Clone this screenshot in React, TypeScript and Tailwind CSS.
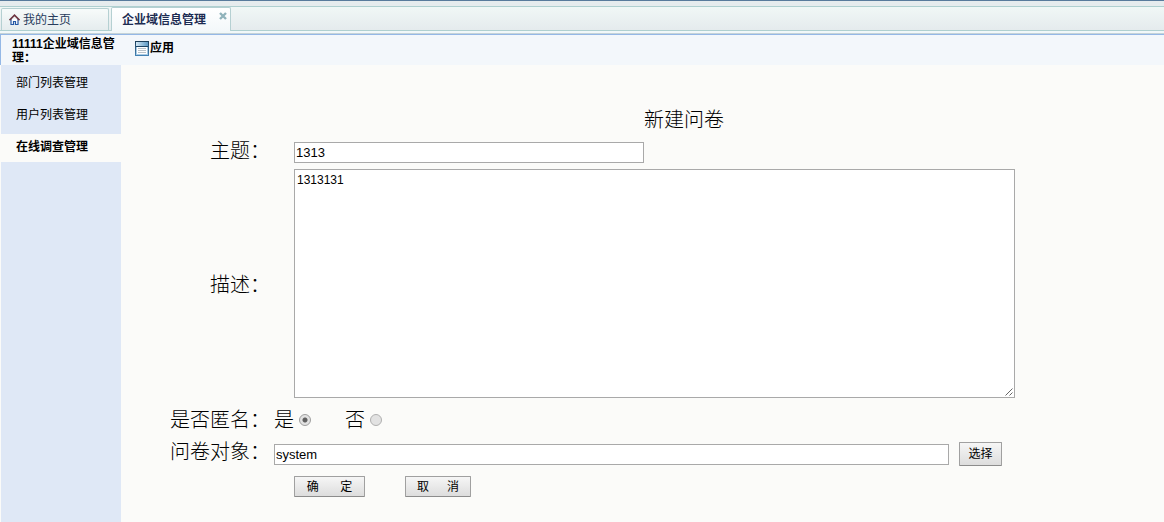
import { useState } from "react";

const sidebarItems = ["部门列表管理", "用户列表管理", "在线调查管理"];

const fieldBox =
  "block border border-[#a9a9a9] bg-white text-black outline-none rounded-none";
const buttonBase =
  "rounded-[1px] border border-[#a0a0a0] border-b-[#8c8c8c] bg-gradient-to-b from-[#f6f6f6] to-[#dddddd] text-xs leading-4 text-black whitespace-pre shrink-0";
const radioBase =
  "size-3 shrink-0 appearance-none rounded-full border border-[#b0b0b0] bg-[#e2e2e2] checked:border-[#a0a0a0] checked:bg-[radial-gradient(circle,#606060_0_2px,#e2e2e2_3px)]";

function HomeIcon() {
  return (
    <svg width="11" height="11" viewBox="0 0 11 11" fill="none" aria-hidden="true">
      <path d="M2 5V10.5H4.5V7.5H6.5V10.5H9V5" fill="#fff" stroke="#2458a6" strokeWidth="1.2" />
      <path d="M0.5 6.2L5.5 1.2L10.5 6.2" stroke="#6d3540" strokeWidth="1.6" />
    </svg>
  );
}

function AppIcon() {
  return (
    <svg width="14" height="15" viewBox="0 0 14 15" aria-hidden="true">
      <defs>
        <linearGradient id="band" x1="0" y1="0" x2="1" y2="0">
          <stop offset="0" stopColor="#d3e8f5" />
          <stop offset="1" stopColor="#5f9ac4" />
        </linearGradient>
        <linearGradient id="frame" x1="0" y1="0" x2="0" y2="1">
          <stop offset="0" stopColor="#1d3f5a" />
          <stop offset="1" stopColor="#4382b4" />
        </linearGradient>
      </defs>
      <rect x="0.5" y="0.5" width="13" height="14" fill="#a9cbe4" stroke="url(#frame)" />
      <rect x="1" y="1" width="12" height="4" fill="url(#band)" />
      <path d="M1 5.5H13" stroke="#1d4463" />
      <rect x="2" y="6" width="10" height="7" fill="#fff" />
      <path d="M3 7.5H11M3 9.5H11M3 11.5H11" stroke="#b9c2c9" />
    </svg>
  );
}

function CloseIcon() {
  return (
    <svg width="8" height="8" viewBox="0 0 8 8" aria-hidden="true">
      <path d="M1 1L7 7M7 1L1 7" stroke="#90b3bb" strokeWidth="2.4" />
    </svg>
  );
}

function ResizeGrip() {
  return (
    <svg width="8" height="8" viewBox="0 0 8 8" className="pointer-events-none absolute right-0.5 bottom-0.5" aria-hidden="true">
      <path d="M0.5 7.5L7.5 0.5M4.5 7.5L7.5 4.5" stroke="#666" strokeWidth="1" />
    </svg>
  );
}

function TabBar() {
  return (
    <header className="border-t border-[#587b9c] bg-[#e6ecee] pt-[5px]">
      <nav className="flex h-[25px] items-end gap-0.5 border-y border-[#afd0d0] bg-gradient-to-b from-[#f0f7f6] to-[#e5ebed] pl-px">
        <button
          type="button"
          className="flex h-[22px] w-[108px] shrink-0 items-center gap-[3px] rounded-t-[2px] border border-b-0 border-[#b5d0d2] bg-gradient-to-b from-[#f7fbfa] to-[#e5ecee] pl-[7px] text-xs text-[#283c5c]"
        >
          <HomeIcon />
          我的主页
        </button>
        <div className="-mb-px flex h-6 w-[120px] shrink-0 items-start rounded-t-[2px] border border-b-0 border-[#b5d0d2] bg-gradient-to-b from-white to-[#f3f8fa] pl-2.5">
          <button type="button" className="h-6 flex-1 text-left text-xs font-bold whitespace-nowrap text-[#1d2c52]">
            企业域信息管理
          </button>
          <button type="button" aria-label="关闭" className="mt-1 mr-[3px]">
            <CloseIcon />
          </button>
        </div>
      </nav>
      <div className="h-[3px] border-b border-[#c5d3d8] bg-[#f1f8f9]" />
      <div className="h-px bg-[#94b8e6]" />
    </header>
  );
}

function Sidebar() {
  return (
    <aside className="flex w-[120px] shrink-0 flex-col gap-1 bg-[#dfe8f6] pt-[5px] text-xs">
      {sidebarItems.map((item, i) => (
        <a
          key={item}
          href="#"
          className={
            i === 2
              ? "flex h-7 items-start bg-[#fbfbf9] pt-[5px] pl-[15px] leading-4 font-bold"
              : "flex h-7 items-start pt-[5px] pl-[15px] leading-4"
          }
        >
          {item}
        </a>
      ))}
    </aside>
  );
}

function SurveyForm() {
  const [anonymous, setAnonymous] = useState("yes");
  return (
    <form className="min-w-0 flex-1 bg-[#fbfbf9] pt-[41px] pl-[49px]" onSubmit={(e) => e.preventDefault()}>
      <h1 className="pl-[34px] text-center text-xl leading-7 font-light">新建问卷</h1>
      <div className="grid grid-cols-[100px_minmax(0,1fr)] items-center gap-x-1 pt-2">
        <label htmlFor="subject" className="pb-1 text-right text-xl leading-4 font-light">主题：</label>
        <div className="pl-5">
          <input id="subject" defaultValue="1313" className={`${fieldBox} h-[21px] w-full max-w-[350px] px-px text-[13px]`} />
        </div>

        <label htmlFor="description" className="pt-2 text-right text-xl leading-7 font-light">描述：</label>
        <div className="pt-1.5 pl-5">
          <div className="relative w-full max-w-[721px]">
            <textarea id="description" defaultValue="1313131" className={`${fieldBox} h-[229px] w-full resize-none px-0.5 py-0.5 text-xs leading-4`} />
            <ResizeGrip />
          </div>
        </div>

        <span id="anon" className="text-right text-xl leading-[44px] font-light">是否匿名：</span>
        <div role="radiogroup" aria-labelledby="anon" className="flex items-center gap-[34px] text-xl leading-[44px] font-light">
          <label className="flex items-center gap-[5px]">
            是
            <input type="radio" name="anonymous" checked={anonymous === "yes"} onChange={() => setAnonymous("yes")} className={radioBase} />
          </label>
          <label className="flex items-center gap-[5px]">
            否
            <input type="radio" name="anonymous" checked={anonymous === "no"} onChange={() => setAnonymous("no")} className={radioBase} />
          </label>
        </div>

        <label htmlFor="target" className="pb-1 text-right text-xl leading-5 font-light">问卷对象：</label>
        <div className="flex items-center gap-2.5">
          <input id="target" defaultValue="system" className={`${fieldBox} h-[21px] w-full max-w-[675px] min-w-0 px-px text-[13px]`} />
          <button type="button" className={`${buttonBase} h-6 w-[43px]`}>选择</button>
        </div>

        <div className="col-start-2 flex gap-10 pt-2.5 pl-5">
          <button type="submit" className={`${buttonBase} h-[21px] w-[71px]`}>{"确\u3000\u2002 定"}</button>
          <button type="button" className={`${buttonBase} h-[21px] w-[66px]`}>{"取\u3000\u2002消"}</button>
        </div>
      </div>
    </form>
  );
}

export default function App() {
  return (
    <div className="flex min-h-screen flex-col bg-[#fbfbf9] font-['Liberation_Sans','Noto_Sans_CJK_SC',sans-serif] text-black">
      <TabBar />
      <div className="flex h-[30px] border-l border-[#94b8e6] bg-[#f3f7fb] text-xs font-bold">
        <h2 className="w-[120px] shrink-0 pt-0.5 pl-[11px] leading-[14px]">11111企业域信息管理：</h2>
        <button type="button" className="ml-3.5 flex h-[26px] items-center gap-px">
          <AppIcon />
          应用
        </button>
      </div>
      <div className="flex flex-1 pl-px">
        <Sidebar />
        <SurveyForm />
      </div>
    </div>
  );
}
